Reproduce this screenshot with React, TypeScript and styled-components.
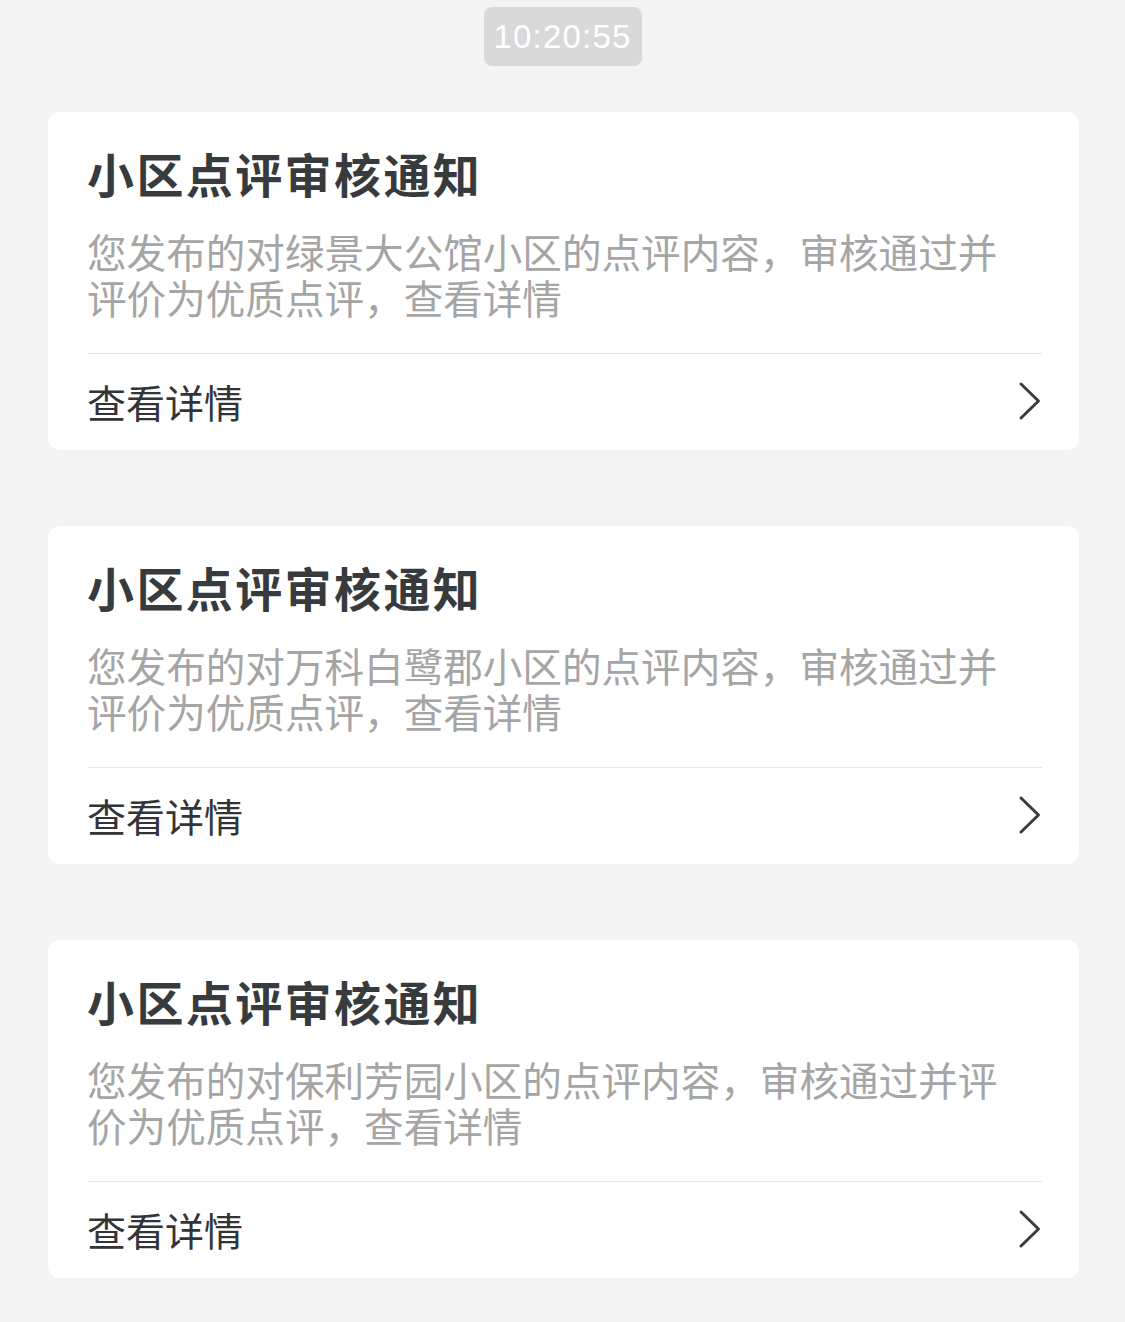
import styled, { createGlobalStyle } from "styled-components";

interface Notice {
  id: number;
  title: string;
  content: string;
}

const notices: Notice[] = [
  {
    id: 1,
    title: "小区点评审核通知",
    content: "您发布的对绿景大公馆小区的点评内容，审核通过并评价为优质点评，查看详情",
  },
  {
    id: 2,
    title: "小区点评审核通知",
    content: "您发布的对万科白鹭郡小区的点评内容，审核通过并评价为优质点评，查看详情",
  },
  {
    id: 3,
    title: "小区点评审核通知",
    content: "您发布的对保利芳园小区的点评内容，审核通过并评价为优质点评，查看详情",
  },
];

const GlobalStyle = createGlobalStyle`
  html, body {
    margin: 0;
    padding: 0;
    background: #f4f4f4;
  }
  body {
    font-family: "Noto Sans CJK SC", "Noto Sans", sans-serif;
  }
`;

const Page = styled.div`
  min-height: 1322px;
  box-sizing: border-box;
  background: #f4f4f4;
  padding: 7px 46px 44px 48px;
  display: flex;
  flex-direction: column;
  align-items: stretch;
`;

const TimeRow = styled.div`
  display: flex;
  justify-content: center;
  margin-left: -2px;
  margin-bottom: 46px;
`;

const TimeBadge = styled.div`
  width: 158px;
  height: 59px;
  border-radius: 8px;
  background: #d9d9d9;
  color: #ffffff;
  font-family: "Liberation Sans", Roboto, sans-serif;
  font-size: 33px;
  letter-spacing: 1.2px;
  display: flex;
  align-items: center;
  justify-content: center;
`;

const List = styled.div`
  display: flex;
  flex-direction: column;
  gap: 76px;
`;

const Card = styled.div`
  background: #ffffff;
  border-radius: 12px;
  padding: 29px 37px 0 39px;
`;

// 标题
const Title = styled.h2`
  margin: 0;
  font-size: 47px;
  line-height: 64px;
  font-weight: 700;
  color: #383b3e;
  letter-spacing: 2.4px;
`;

const Content = styled.p`
  margin: 23px 0 0;
  padding-right: 8px;
  font-size: 39.6px;
  line-height: 46px;
  color: #a5a5a5;
`;

const Footer = styled.div`
  margin-top: 33px;
  border-top: 1px solid #e6e6e6;
  height: 96px;
  display: flex;
  align-items: center;
  justify-content: space-between;
`;

const FooterText = styled.span`
  font-size: 39px;
  color: #333436;
  margin-top: -2px;
`;

const Chevron = () => (
  <svg width="24" height="40" viewBox="0 0 24 40" style={{ marginTop: -2 }}>
    <polyline
      points="3,3 20.5,20 3,37"
      fill="none"
      stroke="#3a3c3e"
      strokeWidth="3"
      strokeLinecap="round"
      strokeLinejoin="round"
    />
  </svg>
);

function App() {
  return (
    <Page>
      <GlobalStyle />
      <TimeRow>
        <TimeBadge>10:20:55</TimeBadge>
      </TimeRow>
      <List>
        {notices.map((n) => (
          <Card key={n.id}>
            <Title>{n.title}</Title>
            <Content>{n.content}</Content>
            <Footer>
              <FooterText>查看详情</FooterText>
              <Chevron />
            </Footer>
          </Card>
        ))}
      </List>
    </Page>
  );
}

export default App;
